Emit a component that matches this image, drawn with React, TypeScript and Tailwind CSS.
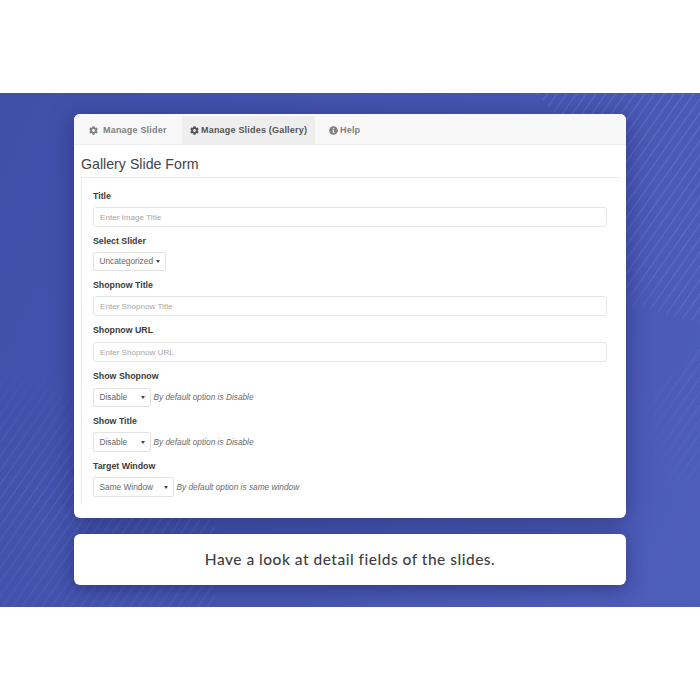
import React from "react";
import { FaCog, FaInfoCircle } from "react-icons/fa";

const Label = ({ children, className = "" }: { children: React.ReactNode; className?: string }) => (
  <div className={`h-[12px] text-[8.8px] leading-[12px] font-bold text-[#3a3a3a] ${className}`}>{children}</div>
);

const TextField = ({ placeholder, className = "" }: { placeholder: string; className?: string }) => (
  <input
    readOnly
    placeholder={placeholder}
    className={`block w-[514px] h-[20px] rounded-[3px] border border-[#e6e6e6] bg-white px-[6px] text-[8.1px] text-[#555] placeholder:text-[#a6a6a6] outline-none ${className}`}
  />
);

const Select = ({ value, width, height = "h-[20px]" }: { value: string; width: string; height?: string }) => (
  <div className={`flex items-center justify-between rounded-[2px] border border-[#e2e2e2] bg-white pl-[5.5px] pr-[5px] text-[8.3px] text-[#666] ${width} ${height}`}>
    <span>{value}</span>
    <svg width="4" height="3" viewBox="0 0 4 3"><path d="M0 0h4L2 3z" fill="#444" /></svg>
  </div>
);

const Hint = ({ children }: { children: React.ReactNode }) => (
  <span className="ml-[2.5px] text-[8.3px] italic text-[#6a6a6a]">{children}</span>
);

const Tab = ({ icon, label, active, className = "" }: { icon: React.ReactNode; label: string; active?: boolean; className?: string }) => (
  <div className={`flex h-[28px] items-center text-[9px] font-bold tracking-[0.2px] ${active ? "bg-[#eeeeee] text-[#555]" : "text-[#808080]"} ${className}`}>
    {icon}
    <span className="pt-[1px]">{label}</span>
  </div>
);

const Stripes = () => (
  <svg className="absolute inset-0 h-full w-full" viewBox="0 0 700 514" preserveAspectRatio="none">
    <defs>
      <pattern id="st" width="8" height="8" patternUnits="userSpaceOnUse" patternTransform="rotate(35)">
        <rect width="1.3" height="8" fill="#ffffff" fillOpacity="0.12" />
      </pattern>
      <linearGradient id="fa" x1="1" y1="0" x2="0.4" y2="1">
        <stop offset="0" stopColor="#fff" stopOpacity="1" />
        <stop offset="0.7" stopColor="#fff" stopOpacity="0.8" />
        <stop offset="1" stopColor="#fff" stopOpacity="0" />
      </linearGradient>
      <linearGradient id="fb" gradientUnits="userSpaceOnUse" x1="40" y1="514" x2="90" y2="270">
        <stop offset="0" stopColor="#fff" stopOpacity="0.35" />
        <stop offset="0.45" stopColor="#fff" stopOpacity="0.7" />
        <stop offset="1" stopColor="#fff" stopOpacity="0" />
      </linearGradient>
      <linearGradient id="fc" x1="1" y1="0.3" x2="0" y2="1">
        <stop offset="0" stopColor="#fff" stopOpacity="0.5" />
        <stop offset="1" stopColor="#fff" stopOpacity="0" />
      </linearGradient>
      <mask id="ma"><polygon points="535,0 700,0 700,230 620,210 620,90" fill="url(#fa)" /></mask>
      <mask id="mb"><rect x="0" y="260" width="215" height="254" fill="url(#fb)" /></mask>
      <mask id="mc"><polygon points="700,250 700,380 640,410 640,320" fill="url(#fc)" /></mask>
    </defs>
    <rect width="700" height="514" fill="url(#st)" mask="url(#ma)" />
    <rect width="700" height="514" fill="url(#st)" mask="url(#mb)" />
    <rect width="700" height="514" fill="url(#st)" mask="url(#mc)" />
  </svg>
);

export default function App() {
  return (
    <div className="h-[700px] w-[700px] bg-white font-['Liberation_Sans',Arial,sans-serif]">
      <div className="h-[93px]" />
      <div className="relative h-[514px] overflow-hidden bg-[linear-gradient(115deg,#414fa9_0%,#4554af_45%,#4e5ebb_100%)] px-[74px] pt-[21px]">
        <Stripes />
        <div className="relative h-[404px] overflow-hidden rounded-[6px] bg-white shadow-[0_4px_22px_rgba(25,30,90,0.5)]">
          <div className="flex h-[31px] items-end border-b border-[#efefef] bg-[#f8f8f8] pl-[15px]">
            <Tab icon={<FaCog size={9} className="mr-[5px]" />} label="Manage Slider" className="w-[93px]" />
            <Tab active icon={<FaCog size={9} className="mr-[2px]" />} label="Manage Slides (Gallery)" className="w-[133px] pl-[8px]" />
            <Tab icon={<FaInfoCircle size={9} className="mr-[2px]" />} label="Help" className="pl-[14px]" />
          </div>
          <h1 className="ml-[7px] mt-[10px] h-[18px] text-[14.2px] leading-[18px] text-[#444]">Gallery Slide Form</h1>
          <div className="ml-[7px] mr-[6px] mt-[4px] h-[327px] border-l border-t border-[#e8e8e8] pl-[11px] pt-[12px]">
            <Label>Title</Label>
            <TextField placeholder="Enter Image Title" className="mt-[5px]" />
            <Label className="mt-[8px]">Select Slider</Label>
            <div className="mt-[5px]"><Select value="Uncategorized" width="w-[73px]" height="h-[19px]" /></div>
            <Label className="mt-[8px]">Shopnow Title</Label>
            <TextField placeholder="Enter Shopnow Title" className="mt-[5px]" />
            <Label className="mt-[8px]">Shopnow URL</Label>
            <TextField placeholder="Enter Shopnow URL" className="mt-[6px]" />
            <Label className="mt-[8px]">Show Shopnow</Label>
            <div className="mt-[6px] flex items-center"><Select value="Disable" width="w-[58px]" height="h-[19px]" /><Hint>By default option is Disable</Hint></div>
            <Label className="mt-[8px]">Show Title</Label>
            <div className="mt-[5px] flex items-center"><Select value="Disable" width="w-[58px]" /><Hint>By default option is Disable</Hint></div>
            <Label className="mt-[8px]">Target Window</Label>
            <div className="mt-[5px] flex items-center"><Select value="Same Window" width="w-[81px]" /><Hint>By default option is same window</Hint></div>
          </div>
        </div>
        <div className="relative mt-[16px] flex h-[51px] items-center justify-center rounded-[6px] bg-white font-['Lato',sans-serif] text-[15.5px] font-medium tracking-[0.5px] text-[#3f3f3f] shadow-[0_4px_18px_rgba(25,30,90,0.5)]">
          Have a look at detail fields of the slides.
        </div>
      </div>
    </div>
  );
}
